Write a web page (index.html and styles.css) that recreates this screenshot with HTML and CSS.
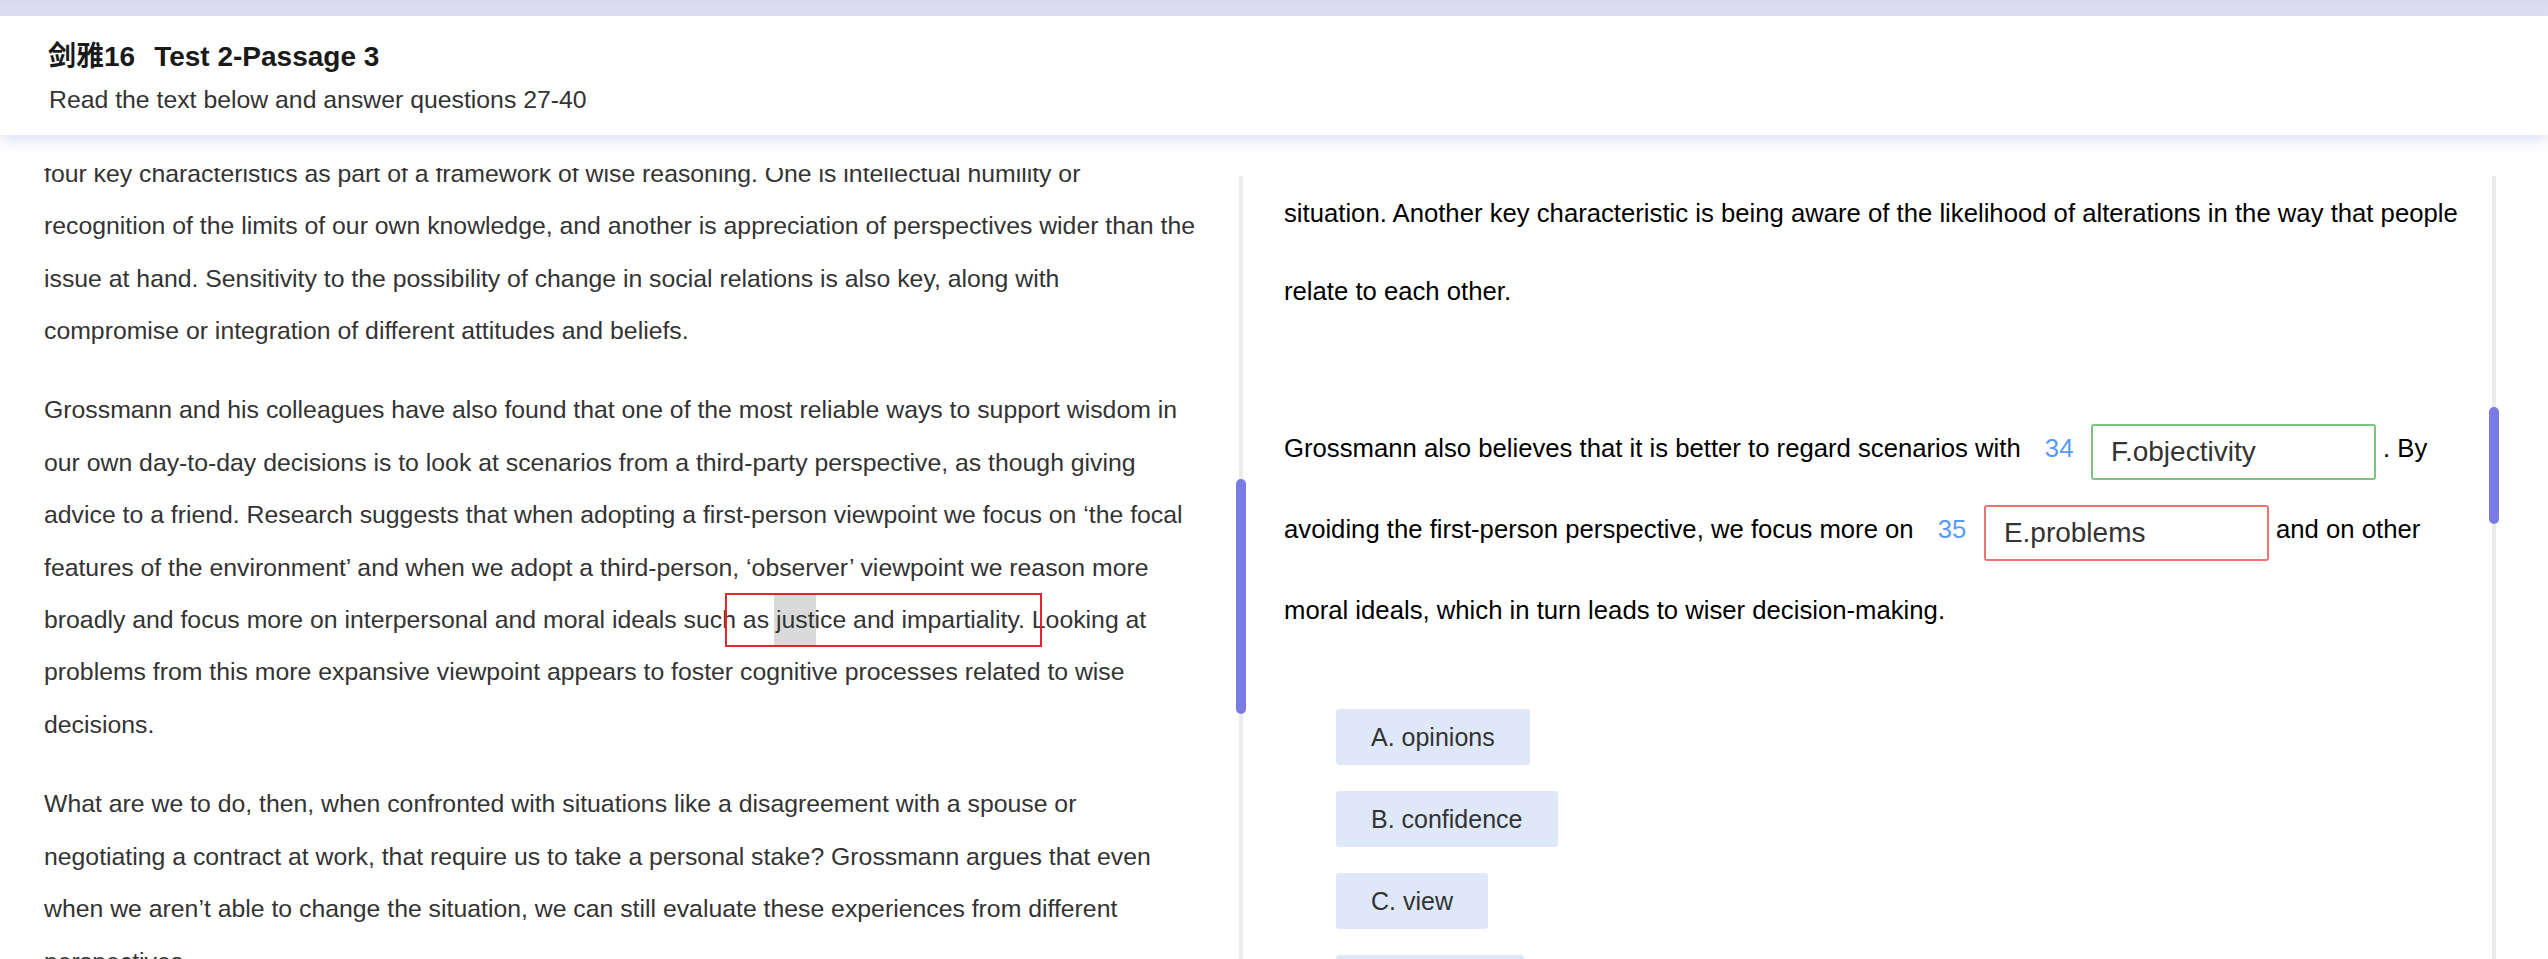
FILE: index.html
```html
<!DOCTYPE html>
<html lang="zh-CN">
<head>
<meta charset="utf-8">
<title>剑雅16 Test 2-Passage 3</title>
<link rel="stylesheet" href="styles.css">
</head>
<body>
<div class="topband"></div>
<header class="header">
  <h1 class="title"><span class="title-book">剑雅16</span><span>Test 2-Passage 3</span></h1>
  <p class="subtitle">Read the text below and answer questions 27-40</p>
</header>
<main class="main">
  <section class="pane pane-left">
    <div class="pane-scroll">
      <div class="passage">
        <p>four key characteristics as part of a framework of wise reasoning. One is intellectual humility or<br>recognition of the limits of our own knowledge, and another is appreciation of perspectives wider than the<br>issue at hand. Sensitivity to the possibility of change in social relations is also key, along with<br>compromise or integration of different attitudes and beliefs.</p>
        <p>Grossmann and his colleagues have also found that one of the most reliable ways to support wisdom in<br>our own day-to-day decisions is to look at scenarios from a third-party perspective, as though giving<br>advice to a friend. Research suggests that when adopting a first-person viewpoint we focus on ‘the focal<br>features of the environment’ and when we adopt a third-person, ‘observer’ viewpoint we reason more<br>broadly and focus more on interpersonal and moral ideals suc<span class="mark">h as <span class="sel">jus</span>tice and impartiality. L</span>ooking at<br>problems from this more expansive viewpoint appears to foster cognitive processes related to wise<br>decisions.</p>
        <p>What are we to do, then, when confronted with situations like a disagreement with a spouse or<br>negotiating a contract at work, that require us to take a personal stake? Grossmann argues that even<br>when we aren’t able to change the situation, we can still evaluate these experiences from different<br>perspectives.</p>
      </div>
    </div>
    <div class="scrollbar"><div class="thumb"></div></div>
  </section>
  <section class="pane pane-right">
    <div class="pane-scroll questions">
      <p class="summary">situation. Another key characteristic is being aware of the likelihood of alterations in the way that people relate to each other.</p>
      <p class="summary fill">Grossmann also believes that it is better to regard scenarios with <span class="qnum">34</span><span class="blank correct">F.objectivity</span> . By avoiding the first-person perspective, we focus more on <span class="qnum">35</span><span class="blank wrong">E.problems</span> and on other moral ideals, which in turn leads to wiser decision-making.</p>
      <ul class="options">
        <li class="option">A. opinions</li>
        <li class="option">B. confidence</li>
        <li class="option">C. view</li>
        <li class="option">D. feelings</li>
      </ul>
    </div>
    <div class="scrollbar"><div class="thumb"></div></div>
  </section>
</main>
</body>
</html>
```
FILE: styles.css
```css
html, body {
  margin: 0;
  padding: 0;
  background: #fff;
  overflow: hidden;
  font-family: "Liberation Sans", "Noto Sans CJK SC", Arial, sans-serif;
}

.topband {
  height: 16px;
  background: linear-gradient(#d8d9ef, #e0e1f4);
}

.header {
  position: relative;
  z-index: 1;
  height: 119px;
  box-sizing: border-box;
  padding: 21px 48px 0;
  background: #fff;
  box-shadow: 0 5px 14px rgba(110, 110, 200, 0.22);
}

.title {
  margin: 0;
  font-size: 28px;
  line-height: 40px;
  font-weight: 700;
  color: #1a1a1a;
}

.title-book {
  margin-right: 19px;
}

.subtitle {
  margin: 6px 0 0;
  padding-left: 1px;
  font-size: 24.8px;
  line-height: 34px;
  color: #333;
}

.main {
  display: flex;
  margin-top: 33px;
  height: 791px;
}

.pane {
  display: flex;
}

.pane-left {
  width: 1246px;
  flex: none;
}

.pane-right {
  flex: 1;
  padding-right: 49px;
}

.pane-scroll {
  flex: 1;
  overflow: hidden;
}

.scrollbar {
  width: 10px;
  flex: none;
  margin-top: 8px;
  background: linear-gradient(to right, transparent 3px, #ebebeb 3px, #ebebeb 7px, transparent 7px);
}

.thumb {
  background: #7b7be6;
  border-radius: 5px;
}

.pane-left .thumb {
  margin-top: 303px;
  height: 235px;
}

.pane-right .thumb {
  margin-top: 231px;
  height: 117px;
}

/* passage */
.passage {
  margin-top: -20.2px;
  padding-left: 44px;
  color: #333;
  font-size: 24.8px;
  line-height: 52.4px;
  white-space: nowrap;
}

.passage p {
  margin: 0 0 27px;
}

.mark {
  position: relative;
}

.mark::after {
  content: "";
  position: absolute;
  left: 3px;
  right: 4px;
  top: -12.6px;
  bottom: -13.7px;
  border: 2px solid #e8232b;
}

.sel {
  background: #dadada;
  padding: 12px 0;
  box-shadow: 8px 0 0 #dadada, -2px 0 0 #dadada;
}

/* questions */
.questions {
  padding: 5.5px 14px 0 38px;
  font-size: 25.7px;
  color: #000;
}

.summary {
  margin: 0;
  line-height: 78px;
}

.fill {
  margin-top: 78px;
  line-height: 81px;
}

.qnum {
  color: #5a9af6;
  margin: 0 17.5px 0 17px;
}

.blank {
  display: inline-block;
  box-sizing: border-box;
  width: 285px;
  height: 56px;
  padding: 0 18px;
  border: 2px solid;
  border-radius: 3px;
  font-size: 28px;
  line-height: 52px;
  color: #333;
  vertical-align: -4px;
}

.blank.correct {
  border-color: #7cc47c;
}

.blank.wrong {
  border-color: #f07272;
}

.options {
  list-style: none;
  margin: 58.5px 0 0 52px;
  padding: 0;
  display: flex;
  flex-direction: column;
  align-items: flex-start;
  gap: 26px;
}

.option {
  height: 56px;
  line-height: 56px;
  padding: 0 35px;
  background: #dee8f9;
  border-radius: 3px;
  font-size: 25px;
  color: #333;
}
```
